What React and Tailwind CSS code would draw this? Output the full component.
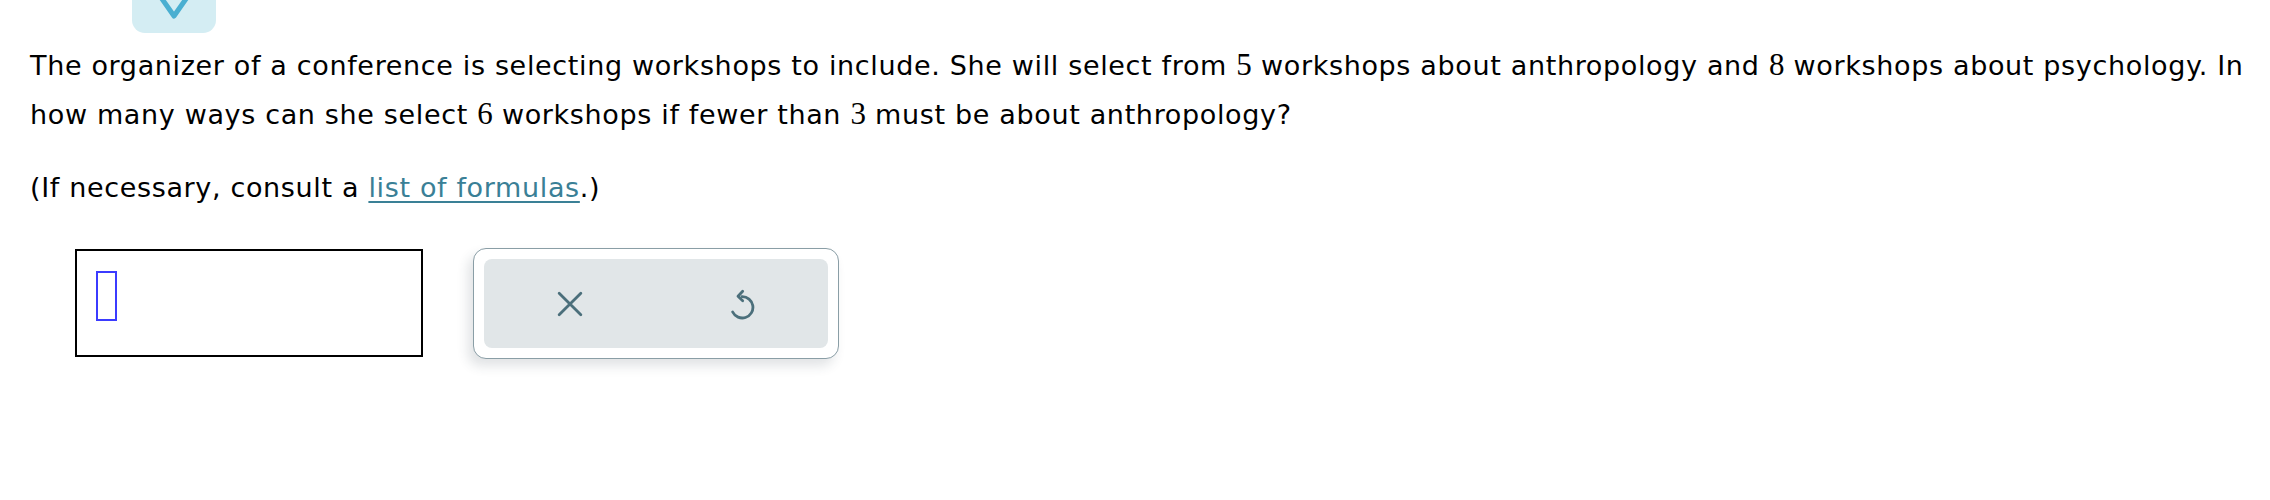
import React from 'react';

// Serif numerals, like the math typesetting in the question text
const Num = ({ children }) => (
  <span className="font-['Liberation_Serif',serif] text-[31px] tracking-normal">{children}</span>
);

const App = () => {
  return (
    <div className="w-[2270px] h-[500px] bg-white pl-[30px] pr-[20px] text-black font-['DejaVu_Sans','Verdana',sans-serif]">
      {/* Collapse tab at the top */}
      <div className="pl-[102px]">
        <div className="w-[84px] h-[33px] rounded-b-[13px] bg-[#d4edf3] flex justify-center items-start overflow-hidden">
          <svg width="34" height="20" viewBox="0 0 34 20" fill="none">
            <polyline points="3,-4 17,16 31,-4" stroke="#4aafd1" strokeWidth="5" strokeLinecap="round" strokeLinejoin="round" />
          </svg>
        </div>
      </div>

      {/* Question text */}
      <p className="mt-[8px] text-[27px] leading-[48px] tracking-[0.65px]">
        The organizer of a conference is selecting workshops to include. She will select from <Num>5</Num> workshops about
        anthropology and <Num>8</Num> workshops about psychology. In how many ways can she select <Num>6</Num> workshops if
        fewer than <Num>3</Num> must be about anthropology?
      </p>
      <p className="mt-[25px] text-[27px] leading-[48px] tracking-[0.65px]">
        (If necessary, consult a{' '}
        <a className="text-[#3a8096] underline decoration-2 underline-offset-[4px]">list of formulas</a>.)
      </p>

      {/* Answer row */}
      <div className="mt-[36px] ml-[45px] flex items-start gap-[50px]">
        <div className="mt-[1px] w-[348px] h-[108px] border-2 border-black pl-[19px] pt-[20px]">
          <div className="w-[21px] h-[50px] border-2 border-[#3b3bff]" />
        </div>

        <div className="w-[366px] h-[111px] rounded-[13px] border-[1.5px] border-[#8a9ea6] bg-white p-[10px] shadow-[-5px_7px_12px_rgba(40,60,70,0.14)]">
          <div className="h-full rounded-[8px] bg-[#e1e6e8] flex">
            <button className="flex-1 flex items-center justify-center">
              <svg width="26" height="26" viewBox="0 0 24 24" fill="none" stroke="#4b6f7b" strokeWidth="2.6" strokeLinecap="round">
                <path d="M2 2L22 22M22 2L2 22" />
              </svg>
            </button>
            <button className="flex-1 flex items-center justify-center">
              <svg width="32" height="32" viewBox="0 0 24 24" fill="none" stroke="#4b6f7b" strokeWidth="2.1" strokeLinecap="round" strokeLinejoin="round">
                <path d="M12 6.5A8 8 0 1 1 5 18" />
                <path d="M12.5 2.5L9 6.2L12.5 9.5" />
              </svg>
            </button>
          </div>
        </div>
      </div>
    </div>
  );
};

export default App;
